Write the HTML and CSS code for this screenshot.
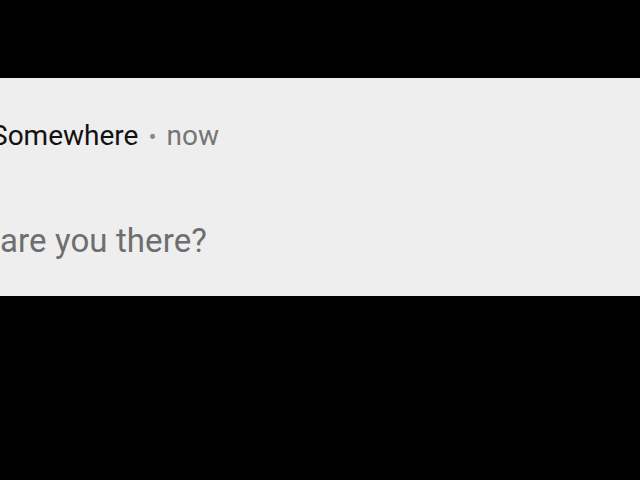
FILE: index.html
```html
<!DOCTYPE html>
<html lang="en">
<head>
    <meta charset="UTF-8">
    <meta name="viewport" content="width=device-width, initial-scale=1.0">
    <title>Notification</title>
    <link rel="stylesheet" href="styles.css">
</head>
<body>
    <div class="notification">
        <div class="notification-header">
            <span class="app-name">Somewhere</span>
            <span class="separator">•</span>
            <span class="time">now</span>
        </div>
        <div class="notification-text">are you there?</div>
    </div>
</body>
</html>
```

FILE: styles.css
```css
* {
    margin: 0;
    padding: 0;
    box-sizing: border-box;
}

body {
    font-family: Roboto, "Noto Sans", sans-serif;
    background-color: #000;
    min-height: 100vh;
    overflow: hidden;
}

.notification {
    margin-top: 78px;
    height: 218px;
    background-color: #eeeeee;
    padding-top: 40px;
}

.notification-header {
    display: flex;
    align-items: baseline;
    gap: 10px;
    margin-left: -9px;
    font-size: 28px;
    line-height: 36px;
}

.app-name {
    color: #121212;
}

.separator {
    color: #8a8a8a;
    font-size: 24px;
}

.time {
    color: #757575;
}

.notification-text {
    margin-top: 66px;
    font-size: 33px;
    letter-spacing: 0.1px;
    line-height: 40px;
    color: #6e6e6e;
}
```
